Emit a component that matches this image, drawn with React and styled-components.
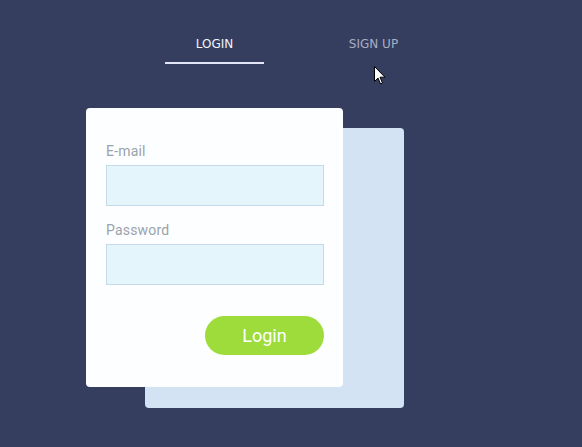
import React from "react";
import styled, { createGlobalStyle } from "styled-components";

const GlobalStyle = createGlobalStyle`
  html, body {
    margin: 0;
    padding: 0;
    background: #363e5f;
  }
  body {
    width: 582px;
    height: 447px;
    overflow: hidden;
    font-family: "Roboto", "Liberation Sans", sans-serif;
  }
`;

const Page = styled.div`
  position: relative;
  width: 582px;
  height: 447px;
  padding-top: 33px;
  box-sizing: border-box;
`;

const Tabs = styled.div`
  display: flex;
  gap: 60px;
  margin-left: 165px;
`;

const Tab = styled.div`
  width: 99px;
  height: 31px;
  box-sizing: border-box;
  text-align: center;
  font-family: "DejaVu Sans", "Liberation Sans", sans-serif;
  font-size: 12px;
  line-height: 22px;
  color: ${({ active }) => (active ? "#f2f4fc" : "#a9aec3")};
  border-bottom: 2px solid ${({ active }) => (active ? "#e3e6f6" : "transparent")};
`;

const Cards = styled.div`
  position: relative;
  margin: 44px 0 0 86px;
  width: 257px;
`;

const BackCard = styled.div`
  position: absolute;
  left: 59px;
  top: 20px;
  width: 259px;
  height: 280px;
  background: #d4e3f3;
  border-radius: 4px;
`;

const Card = styled.form`
  position: relative;
  display: flex;
  flex-direction: column;
  width: 257px;
  height: 279px;
  box-sizing: border-box;
  padding: 35px 19px 0 20px;
  background: #fdfeff;
  border-radius: 4px;
`;

const Label = styled.label`
  font-size: 14px;
  line-height: 16px;
  color: #9aa3ab;
  letter-spacing: 0.2px;
  margin-top: ${({ first }) => (first ? "0" : "16px")};
  margin-bottom: 6px;
`;

const Input = styled.input`
  height: 41px;
  box-sizing: border-box;
  border: 1px solid #c6d9e7;
  background: #e5f5fc;
  outline: none;
`;

const Actions = styled.div`
  display: flex;
  justify-content: flex-end;
  margin-top: 31px;
`;

const Button = styled.button`
  width: 119px;
  height: 39px;
  border: none;
  border-radius: 20px;
  background: #9ddc3b;
  color: #ffffff;
  font-family: "Roboto", "Liberation Sans", sans-serif;
  font-size: 18px;
  cursor: pointer;
`;

const Cursor = styled.svg`
  position: absolute;
  left: 374px;
  top: 66px;
`;

const App = () => {
  return (
    <Page>
      <GlobalStyle />
      <Tabs>
        <Tab active>LOGIN</Tab>
        <Tab>SIGN UP</Tab>
      </Tabs>
      <Cards>
        <BackCard />
        <Card onSubmit={(ev) => ev.preventDefault()}>
          <Label first>E-mail</Label>
          <Input type="text" />
          <Label>Password</Label>
          <Input type="password" />
          <Actions>
            <Button type="submit">Login</Button>
          </Actions>
        </Card>
      </Cards>
      <Cursor width="12" height="19" viewBox="0 0 12 19">
        <path
          d="M0.5 0.5 L0.5 15.5 L4 12 L6.5 18 L8.5 17 L6 11.2 L11 11.2 Z"
          fill="#ffffff"
          stroke="#000000"
          strokeWidth="1"
          strokeLinejoin="miter"
        />
      </Cursor>
    </Page>
  );
};

export default App;
